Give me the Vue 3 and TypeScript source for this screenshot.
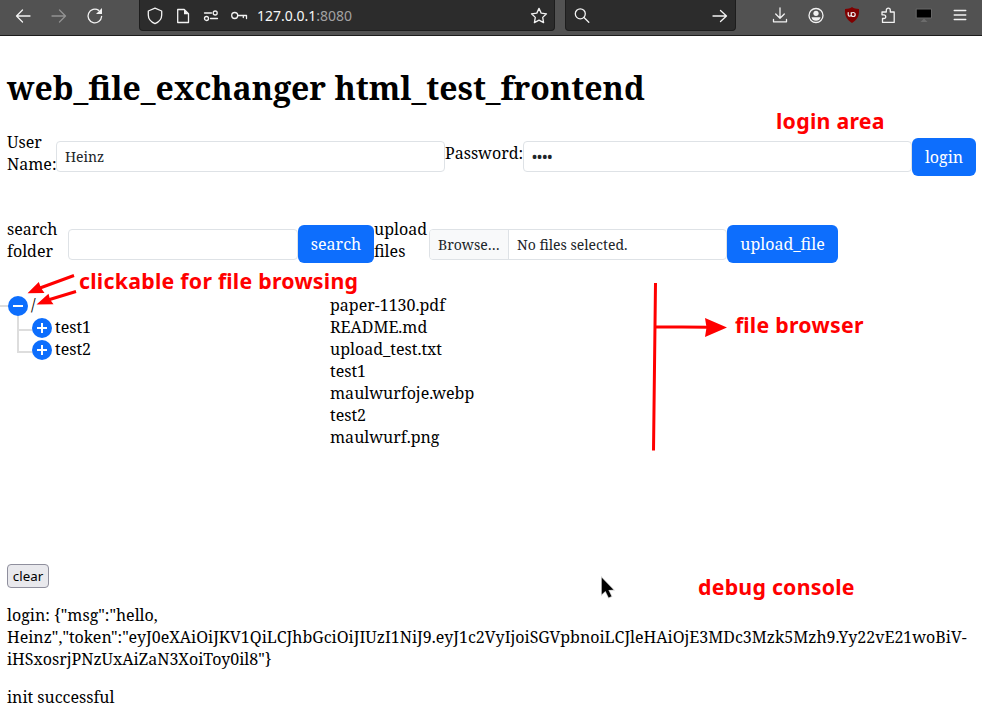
<script setup lang="ts">
import { ref } from 'vue'

const userName = ref('Heinz')
const password = ref('abcd')
const search = ref('')
const folders = ['test1', 'test2']
const files = ['paper-1130.pdf', 'README.md', 'upload_test.txt', 'test1', 'maulwurfoje.webp', 'test2', 'maulwurf.png']
const lines = ref<string[][]>([
  [
    'login: {"msg":"hello,',
    'Heinz","token":"eyJ0eXAiOiJKV1QiLCJhbGciOiJIUzI1NiJ9.eyJ1c2VyIjoiSGVpbnoiLCJleHAiOjE3MDc3Mzk5Mzh9.Yy22vE21woBiV-',
    'iHSxosrjPNzUxAiZaN3XoiToy0il8"}',
  ],
  ['init successful'],
])
</script>

<template>
  <div class="page">
    <header class="toolbar">
      <nav class="nav">
        <svg width="18" height="18" viewBox="0 0 18 18"><path d="M16 9H2.500M8.500 3l-6 6 6 6" /></svg>
        <svg class="dim" width="18" height="18" viewBox="0 0 18 18"><path d="M2 9h13.500M9.500 3l6 6-6 6" /></svg>
        <svg width="18" height="18" viewBox="0 0 18 18"><path d="M15.600 9.500A6.800 6.800 0 1 1 12.700 3.400" /><path class="fill" d="M16 1v6h-6z" /></svg>
      </nav>
      <div class="urlbar">
        <svg width="18" height="18" viewBox="0 0 18 18"><path d="M9 1.200 15.700 4v4c0 4-2.700 7-6.700 8.600C5 15 2.300 12 2.300 8V4z" /></svg>
        <svg width="18" height="18" viewBox="0 0 18 18"><path d="M3.700 2.500h6.500l4.300 4.300v8.700H3.700z" /><path class="fill" d="M10 2.500v4.700h4.700z" /></svg>
        <svg width="18" height="18" viewBox="0 0 18 18"><path d="M2.500 6h7M8.500 11.500h7" /><circle cx="13.200" cy="6" r="2" /><circle cx="4.500" cy="11.500" r="2" /></svg>
        <svg class="key" width="18" height="18" viewBox="0 0 18 18"><circle cx="4.700" cy="8.500" r="3" /><path d="M7.800 8.500h8.700v3M13.300 8.500v2" /></svg>
        <span class="url">127.0.0.1<i>:8080</i></span>
        <svg class="star" width="18" height="18" viewBox="0 0 18 18"><path d="m9 1.400 2.200 4.700 5.300.7-3.800 3.600.9 5.200L9 13.100l-4.600 2.500.9-5.200L1.500 6.800l5.300-.7z" /></svg>
      </div>
      <div class="searchbar">
        <svg width="18" height="18" viewBox="0 0 18 18"><circle cx="7.300" cy="6.800" r="5" /><path d="m11 10.500 4.800 4.800" /></svg>
        <svg class="go" width="18" height="18" viewBox="0 0 18 18"><path d="M2 9h13.500M9.500 3.500l6 5.500-6 5.500" /></svg>
      </div>
      <nav class="tools">
        <svg width="18" height="18" viewBox="0 0 18 18"><path d="M9 .8v10M4.700 7 9 11.300 13.300 7M2.500 12.500v2.300h13v-2.300" /></svg>
        <svg width="18" height="18" viewBox="0 0 18 18"><circle cx="9" cy="8.500" r="7" /><circle class="fill" cx="9" cy="6.300" r="2.600" /><path class="fill" d="M4.500 10.200h9c-.5 2.500-2 3.500-4.500 3.500s-4-1-4.500-3.500z" /></svg>
        <svg width="18" height="18" viewBox="0 0 18 18"><path class="shield" d="M9 0c2 1.500 4 1.500 7 2 .5 7-2 11-7 14C4 13 1.500 9 2 2c3-.5 5-.5 7-2z" /><path class="mark" d="M5.200 5.500v2.200c0 2 3 2 3 0V5.500M8.200 7.500a2 2 0 1 0 4 0 2 2 0 1 0-4 0" /></svg>
        <svg width="18" height="18" viewBox="0 0 18 18"><path d="M3.500 15.400v-3.900h1.400a1.800 1.800 0 0 0 0-3.700H3V5h4.300V3.200a2 2 0 0 1 4 0V5h3.900v10.400z" /></svg>
        <svg width="18" height="18" viewBox="0 0 18 18"><path class="stand" d="M9 11.500 12.500 15h-7z" /><rect class="screen" x="1.500" y="2" width="15" height="9" /></svg>
        <svg width="18" height="18" viewBox="0 0 18 18"><path d="M3.200 3.500h11.600M3.200 8h11.600M3.200 12.500h11.600" /></svg>
      </nav>
    </header>

    <main>
      <h1>web_file_exchanger html_test_frontend</h1>

      <form class="row login" @submit.prevent>
        <label class="name-label">User<br>Name:</label>
        <input v-model="userName" class="field wide" type="text">
        <label class="pass-label">Password:</label>
        <input v-model="password" class="field wide pass" type="password">
        <button class="btn b-login">login</button>
      </form>

      <form class="row actions" @submit.prevent>
        <label class="search-label">search<br>folder</label>
        <input v-model="search" class="field find" type="text">
        <button class="btn b-search">search</button>
        <label class="upload-label">upload<br>files</label>
        <div class="field picker"><span class="browse">Browse…</span><span class="chosen">No files selected.</span></div>
        <button class="btn b-upload">upload_file</button>
      </form>

      <section class="browser">
        <div class="tree">
          <div class="node root">
            <svg width="20" height="20" viewBox="0 0 20 20"><circle cx="10" cy="10" r="10" /><path d="M5 10h10" /></svg>
            <span>/</span>
          </div>
          <div v-for="folder in folders" :key="folder" class="node child">
            <svg width="20" height="20" viewBox="0 0 20 20"><circle cx="10" cy="10" r="10" /><path d="M5 10h10M10 5v10" /></svg>
            <span>{{ folder }}</span>
          </div>
        </div>
        <div class="files">
          <div v-for="file in files" :key="file">{{ file }}</div>
        </div>
      </section>

      <button class="clear" @click="lines = []">clear</button>
      <section class="console">
        <p v-for="(entry, i) in lines" :key="i"><span v-for="(part, j) in entry" :key="j">{{ part }}</span></p>
      </section>
    </main>

    <svg class="notes" width="982" height="717" viewBox="0 0 982 717">
      <g class="strokes">
        <path d="M74 275.500 40 288M76 291.500 48 300M655.500 283l-2 167.500M656 326.700l52 .6" />
      </g>
      <path d="m27.500 293.300 11.300-11.300 2.200 6 3.500 5zM36.500 304.500l12-10.800 1.500 5.800 3.500 4.800zM727 327.500l-22-9.500 1.500 9.500L705 337z" />
      <text x="776" y="129" textLength="108.500">login area</text>
      <text x="79" y="289" textLength="279">clickable for file browsing</text>
      <text x="735" y="333" textLength="128.500">file browser</text>
      <text x="698" y="595" textLength="156.500">debug console</text>
      <path class="cursor" d="M601.800 577.800v16.500l3.700-3.300 3.200 6.500 2.700-1.200-3-6.200 5-.3z" />
    </svg>
  </div>
</template>

<style>
body {
  background: #fff;
  overflow: hidden;
}
</style>

<style scoped>
* { box-sizing: border-box; }
.page {
  position: relative;
  width: 982px;
  height: 717px;
  overflow: hidden;
  color: #000;
  font: 16px/22px "Noto Serif", "Droid Serif", "DejaVu Serif Condensed", "Liberation Serif", serif;
}
.toolbar {
  display: flex;
  height: 36px;
  background: #525252;
  border-bottom: 1px solid #1c1c1c;
}
.toolbar svg {
  flex: none;
  fill: none;
  stroke: #f2f2f2;
  stroke-width: 1.3;
  stroke-linejoin: round;
  stroke-linecap: round;
}
.toolbar .fill { fill: #f2f2f2; stroke: none; }
.toolbar .dim { stroke: #929292; }
.nav { display: flex; gap: 18px; width: 139px; padding: 7px 0 0 14px; }
.urlbar, .searchbar {
  display: flex;
  height: 31px;
  padding: 7px 7px 0;
  background: #2c2c2c;
  border: 1px solid #1d1d1d;
  border-top: 0;
  border-radius: 0 0 4px 4px;
}
.urlbar { width: 416px; gap: 10px; padding: 7px 6px 0; }
.url {
  margin-left: -1px;
  color: #f7f7f7;
  font: 14px/18px "Noto Sans", sans-serif;
}
.url i { color: #a2a2a2; font-style: normal; }
.star { margin-left: auto; }
.searchbar { width: 171px; margin-left: 10px; padding-right: 6px; justify-content: space-between; }
.tools { display: flex; gap: 18px; margin-left: 35px; padding-top: 7px; }
.toolbar .shield { fill: #800000; stroke: none; }
.toolbar .mark { stroke-width: 1.2; }
.toolbar .stand { fill: #6c6c6c; stroke: none; }
.toolbar .screen { fill: #000; stroke: #666; stroke-width: 1; }

main { padding: 0 7px; }
h1 {
  margin: 28px 0 0;
  font-size: 32px;
  font-weight: 700;
  line-height: 48px;
  white-space: nowrap;
}
.row { display: flex; align-items: flex-start; height: 45px; white-space: nowrap; }
.login { margin-top: 19px; }
.actions { margin-top: 42px; }
.name-label { width: 49px; }
.pass-label { width: 78px; margin-top: 11px; }
.search-label { width: 61px; }
.upload-label { width: 55px; }
label { flex: none; }
.field {
  flex: none;
  height: 31px;
  margin: 10px 0 0;
  padding: 0 8px;
  border: 1px solid #dee2e6;
  border-radius: 4px;
  background: #fff;
  color: #212529;
  font: 14px/21px "Noto Serif", "Droid Serif", "DejaVu Serif Condensed", "Liberation Serif", serif;
}
.actions .field { margin-top: 11px; }
.wide { width: 389px; }
.find { width: 230px; }
.picker { display: flex; width: 298px; padding: 0; line-height: 29px; overflow: hidden; }
.browse { width: 79px; padding-left: 8px; background: #f8f9fa; border-right: 1px solid #dee2e6; }
.chosen { padding-left: 8px; }
.btn {
  flex: none;
  height: 38px;
  margin: 7px 0 0;
  padding: 0;
  border: 0;
  border-radius: 6px;
  background: #0d6efd;
  color: #fff;
  font: inherit;
}
.b-login { width: 64px; }
.b-search { width: 76px; }
.b-upload { width: 111px; }

.browser { display: flex; height: 270px; margin-top: 31px; }
.tree { width: 323px; }
.node { position: relative; display: flex; height: 22px; align-items: center; }
.node svg { position: relative; z-index: 1; fill: #0d6efd; margin-top: 2px; }
.node path { stroke: #fff; stroke-width: 2; }
.root { padding-left: 1px; gap: 3px; }
.child { padding-left: 25px; gap: 3px; }
.root::before {
  content: "";
  position: absolute;
  left: -7px;
  top: 11px;
  width: 10px;
  height: 2px;
  background: #ddd;
}
.child::before {
  content: "";
  position: absolute;
  left: 10px;
  top: -9px;
  width: 16px;
  height: 22px;
  border: solid #ddd;
  border-width: 0 0 2px 2px;
}
.clear {
  display: block;
  width: 42px;
  height: 24px;
  padding: 0;
  border: 1px solid #8f8f9d;
  border-radius: 4px;
  background: #e9e9ed;
  color: #000;
  font: 13.300px/20px "Noto Sans", sans-serif;
}
.console p { margin: 16px 0 0; white-space: nowrap; }
.console span { display: block; width: max-content; }

.notes { position: absolute; left: 0; top: 0; pointer-events: none; fill: #f00; }
.strokes { stroke: #f00; stroke-width: 3; fill: none; }
.notes text { font: 700 21.300px "Noto Sans", sans-serif; }
.cursor { fill: #000; stroke: #ccc; stroke-width: 1.500; paint-order: stroke; }
</style>
